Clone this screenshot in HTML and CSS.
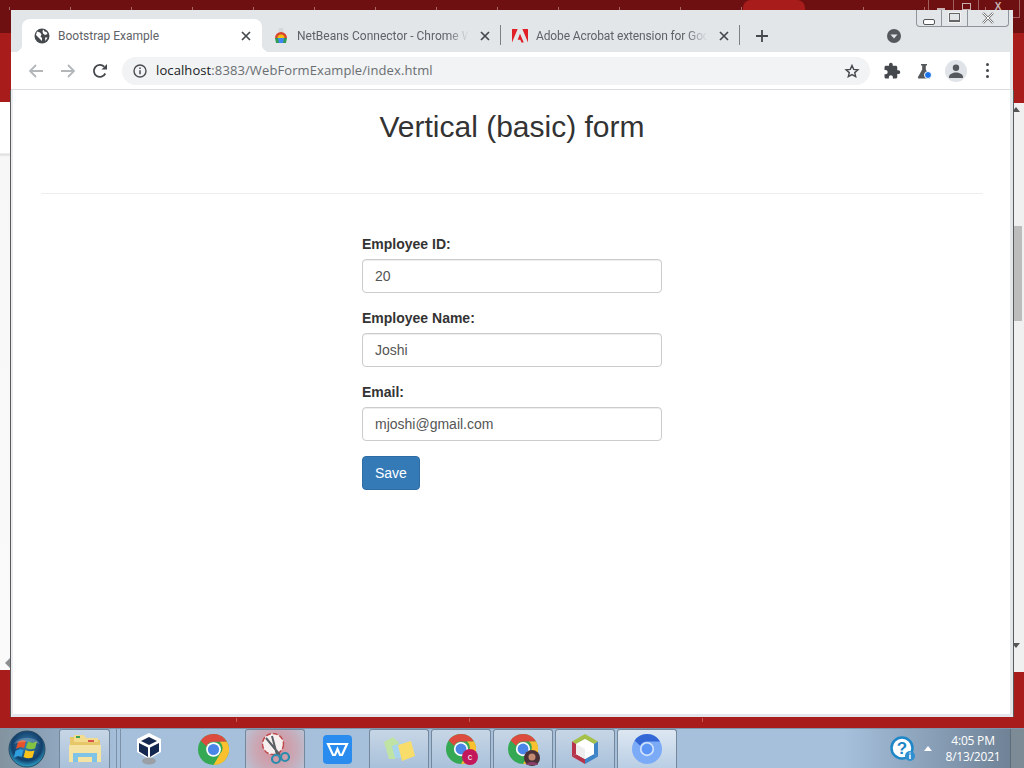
FILE: index.html
```html
<!DOCTYPE html>
<html lang="en">
<head>
<meta charset="utf-8">
<title>Bootstrap Example</title>
<link rel="stylesheet" href="styles.css">
</head>
<body>
<svg class="defs" width="0" height="0">
  <symbol id="chrome" viewBox="0 0 32 32">
    <circle cx="16" cy="16" r="16" fill="#34a853"/>
    <path d="M16 0A16 16 0 0 1 29.900 8H16a8 8 0 0 0-7.300 4.600L2.800 7A16 16 0 0 1 16 0z" fill="#dd4b3e"/>
    <path d="M29.900 8A16 16 0 0 1 16 32l7-12a8 8 0 0 0-.6-12z" fill="#fbc02d"/>
    <circle cx="16" cy="16" r="7.600" fill="#fff"/>
    <circle cx="16" cy="16" r="5.800" fill="#4a86e8"/>
  </symbol>
  <symbol id="close" viewBox="0 0 10 10">
    <path d="M1 1l8 8M9 1L1 9" stroke="#45484c" stroke-width="1.700" fill="none"/>
  </symbol>
</svg>

<main class="desktop">
  <div class="bg-top"><i class="pill"></i></div>
  <div class="bg-ctrl">
    <span class="bg-cell"><i class="bg-min"></i></span>
    <span class="bg-cell"><i class="bg-max"></i></span>
    <span class="bg-cell bg-x">X</span>
  </div>
  <div class="bg-window-left"><i class="scroll-left"></i></div>
  <div class="bg-window-right"><i class="scroll-up"></i><i class="thumb"></i><i class="scroll-down"></i></div>

  <section class="window">
    <div class="win-controls">
      <span class="wc wc-min"><i></i></span>
      <span class="wc wc-max"><i></i></span>
      <span class="wc wc-close"><svg width="14" height="12" viewBox="0 0 14 12"><path d="M2 1l10 10M12 1L2 11" stroke="#777" stroke-width="2.400" fill="none"/><path d="M2 1l10 10M12 1L2 11" stroke="#fff" stroke-width="1" fill="none"/></svg></span>
    </div>
    <header class="tabstrip">
      <div class="tab tab-active">
        <svg class="favicon" width="16" height="16" viewBox="0 0 16 16"><circle cx="8" cy="8" r="7.500" fill="#45494e"/><path d="M3 3.500l3 1 1.500 2-1 2 1.500 1.500v3L5 10 2 7zM9.500 1.500l1 2 2 .5 1 2-2.500 1-2-1.500-.5-2.500zM11 9.500l2.500 0-2 3.500z" fill="#fff"/></svg>
        <span class="tab-title">Bootstrap Example</span>
        <svg class="tab-x" width="10" height="10"><use href="#close"/></svg>
      </div>
      <div class="tab">
        <svg class="favicon" width="16" height="16" viewBox="0 0 16 16"><path d="M6 0h4l.5 4h-5z" fill="#d5d7d9"/><path d="M2 10a6 6 0 0 1 12 0z" fill="#d8452f"/><path d="M4.500 10a3.500 3.500 0 0 1 7 0z" fill="#f4c20d"/><path d="M2 10h12l-1 5H3z" fill="#2f9e55"/><path d="M5 10h6l-1 5H6z" fill="#4285f4"/></svg>
        <span class="tab-title fade">NetBeans Connector - Chrome W</span>
        <svg class="tab-x" width="10" height="10"><use href="#close"/></svg>
      </div>
      <div class="tab">
        <svg class="favicon" width="16" height="16" viewBox="0 0 17 16"><path d="M0 .5h6L0 15zM17 .5h-6l6 14.500zM8.500 5.500L12.500 15H10l-1.200-3H6z" fill="#e01f26"/></svg>
        <span class="tab-title fade fade-tight">Adobe Acrobat extension for Goo</span>
        <svg class="tab-x" width="10" height="10"><use href="#close"/></svg>
      </div>
      <svg class="newtab" width="12" height="12" viewBox="0 0 12 12"><path d="M6 0v12M0 6h12" stroke="#45484c" stroke-width="1.800"/></svg>
      <svg class="tabsearch" width="14" height="14" viewBox="0 0 14 14"><circle cx="7" cy="7" r="7" fill="#55585d"/><path d="M3.500 5.500h7L7 9.500z" fill="#e3e6e9"/></svg>
    </header>

    <nav class="toolbar">
      <svg class="tool-btn" width="16" height="16" viewBox="0 0 16 16"><path d="M15 8H2M8 2L2 8l6 6" stroke="#b4b7ba" stroke-width="1.800" fill="none"/></svg>
      <svg class="tool-btn" width="16" height="16" viewBox="0 0 16 16"><path d="M1 8h13M8 2l6 6-6 6" stroke="#b4b7ba" stroke-width="1.800" fill="none"/></svg>
      <svg class="tool-btn" width="16" height="16" viewBox="0 0 16 16"><path d="M13.300 10.500A6 6 0 1 1 12.200 3.700" stroke="#45484c" stroke-width="1.800" fill="none"/><path d="M9.500 6.500H15V1z" fill="#45484c"/></svg>
      <div class="omnibox">
        <svg width="14" height="14" viewBox="0 0 14 14"><circle cx="7" cy="7" r="6" stroke="#4a4d51" stroke-width="1.400" fill="none"/><path d="M7 6.200v4M7 3.400v1.500" stroke="#4a4d51" stroke-width="1.500"/></svg>
        <span class="url"><b>localhost</b>:8383/WebFormExample/index.html</span>
        <svg class="star" width="16" height="16" viewBox="0 0 16 16"><path d="M8 2.500l1.700 3.900 4.200.4-3.200 2.800 1 4.100L8 11.600l-3.700 2.100 1-4.100-3.200-2.800 4.200-.4z" stroke="#45484c" stroke-width="1.400" fill="none"/></svg>
      </div>
      <svg class="ext ext-puzzle" width="18" height="18" viewBox="0 0 24 24"><path d="M20.500 11H19V7c0-1.100-.9-2-2-2h-4V3.500C13 2.120 11.880 1 10.500 1S8 2.120 8 3.500V5H4c-1.100 0-1.990.9-1.990 2v3.800H3.500c1.490 0 2.700 1.210 2.700 2.700s-1.210 2.700-2.700 2.700H2V20c0 1.100.9 2 2 2h3.800v-1.500c0-1.490 1.210-2.700 2.700-2.700 1.490 0 2.700 1.210 2.700 2.700V22H17c1.100 0 2-.9 2-2v-4h1.500c1.380 0 2.500-1.120 2.500-2.500S21.880 11 20.500 11z" fill="#45484c"/></svg>
      <svg class="ext" width="16" height="16" viewBox="0 0 16 16"><path d="M5 1h6v1.500H9.800v4L14 14c.3 1-.2 1.500-1 1.500H3c-.8 0-1.300-.5-1-1.500l4.200-7.500v-4H5z" fill="#55585b"/><circle cx="12" cy="12" r="3.500" fill="#1a73e8" stroke="#fff"/></svg>
      <div class="avatar"><svg width="14" height="14" viewBox="0 0 14 14"><circle cx="7" cy="3.800" r="3.200" fill="#55585d"/><path d="M0 13c0-3 4-4.500 7-4.500s7 1.500 7 4.500v1H0z" fill="#55585d"/></svg></div>
      <div class="menu-dots"><i></i><i></i><i></i></div>
    </nav>

    <div class="page">
      <h2 class="page-title">Vertical (basic) form</h2>
      <hr class="rule">
      <form class="form">
        <div class="form-group">
          <label for="eid">Employee ID:</label>
          <input id="eid" class="form-control" type="text" value="20">
        </div>
        <div class="form-group">
          <label for="ename">Employee Name:</label>
          <input id="ename" class="form-control" type="text" value="Joshi">
        </div>
        <div class="form-group">
          <label for="email">Email:</label>
          <input id="email" class="form-control" type="text" value="mjoshi@gmail.com">
        </div>
        <button class="btn" type="button">Save</button>
      </form>
    </div>
  </section>
</main>

<footer class="taskbar">
  <div class="start">
    <svg width="38" height="38" viewBox="0 0 38 38">
      <defs><radialGradient id="orb" cx="50%" cy="40%" r="60%"><stop offset="0" stop-color="#3c86b4"/><stop offset=".7" stop-color="#123f6b"/><stop offset="1" stop-color="#2fa7cf"/></radialGradient></defs>
      <circle cx="19" cy="19" r="18" fill="url(#orb)" stroke="#274a63"/>
      <path d="M10 12c3-2 6-2 8-1l-2 7c-2-1-5-1-8 1z" fill="#e8532a"/>
      <path d="M20 11.500c3 1.500 6 1.500 9 0l-2 7c-3 1-6 1-9-.5z" fill="#84c341"/>
      <path d="M7.500 21c3-2 6-2 8-1l-1.800 7c-2-1-5-1-8 1z" fill="#2f9fe0"/>
      <path d="M17.500 20c3 1.500 6 1.500 9 .5l-2 7c-3 1-6 1-9-.5z" fill="#f9c31b"/>
      <path d="M6 14a14 10 0 0 1 26 0c-8-3-18-3-26 0z" fill="#fff" opacity=".22"/>
    </svg>
  </div>
  <div class="task task-explorer">
    <svg width="34" height="30" viewBox="0 0 34 30"><path d="M2 3h12l2 3h16v22H2z" fill="#e8c66a"/><path d="M6 1h10l2 3h12v4H6z" fill="#f3dc8d"/><rect x="8" y="2" width="4" height="2" fill="#3fa055"/><rect x="20" y="6" width="6" height="2" fill="#d9534f"/><path d="M1 11h32v17H1z" fill="#f4e3a3"/><path d="M5 28v-9h24v9h-5v-5H10v5z" fill="#7fc4e6"/></svg>
  </div>
  <div class="task-sep"></div>
  <div class="task-row">
    <div class="task task-plain">
      <svg class="vbox" width="26" height="32" viewBox="0 0 26 32"><path d="M13 0l12 6v13l-12 7-12-7V6z" fill="#fff"/><path d="M13 4l8 4-8 4-8-4z" fill="#14274e"/><path d="M3 10l9 4.500V24l-9-5.500zM23 10l-9 4.500V24l9-5.500z" fill="#14274e"/><ellipse cx="13" cy="28" rx="7" ry="3.500" fill="#9aa0a6"/></svg>
    </div>
    <div class="task task-plain"><svg width="31" height="31"><use href="#chrome"/></svg></div>
    <div class="task task-snip">
      <svg width="32" height="32" viewBox="0 0 32 32"><circle cx="14" cy="11" r="10.500" fill="#f6f0f0" stroke="#c04848" stroke-width="1.400" stroke-dasharray="5 2"/><path d="M7 5l14 17M13 3l5 19" stroke="#5a5f63" stroke-width="2"/><circle cx="17" cy="26" r="4" fill="none" stroke="#2a8cae" stroke-width="2.200"/><circle cx="26" cy="24" r="4" fill="none" stroke="#2a8cae" stroke-width="2.200"/></svg>
    </div>
    <div class="task task-plain">
      <svg width="29" height="29" viewBox="0 0 29 29"><rect width="29" height="29" rx="4" fill="#2b8cf0"/><path d="M5 9h19l-5 11h-2l-2.500-6-2.500 6h-2z" fill="none" stroke="#fff" stroke-width="2.200"/></svg>
    </div>
    <div class="task">
      <svg width="32" height="30" viewBox="0 0 32 30"><path d="M1 8l9-5 7 7-5 15H6z" fill="#bfe3a5"/><path d="M9 12l11-4 4 16H12z" fill="#a8d4ec"/><path d="M15 11l13-4 4 15-13 5z" fill="#f9dd6b"/></svg>
    </div>
    <div class="task">
      <svg class="over" width="30" height="30"><use href="#chrome"/></svg>
      <span class="badge-c">c</span>
    </div>
    <div class="task">
      <svg class="over" width="30" height="30"><use href="#chrome"/></svg>
      <svg class="badge-face" width="16" height="16" viewBox="0 0 16 16"><circle cx="8" cy="8" r="8" fill="#4b3038"/><circle cx="8" cy="7" r="3.500" fill="#c58b72"/><path d="M2 15c1-4 11-4 12 0z" fill="#8a3f68"/></svg>
    </div>
    <div class="task">
      <svg width="30" height="32" viewBox="0 0 30 32"><path d="M15 1l13 7.500-4 2.500-9-5-9 5-4-2.500z" fill="#a6c14a"/><path d="M2 8.500L6 11v10l-4 2.500z" fill="#b8344a"/><path d="M28 8.500L24 11v10l4 2.500z" fill="#3d85c6"/><path d="M2 23.500l4-2.500 9 5v5z" fill="#b8344a"/><path d="M28 23.500L24 21l-9 5v5z" fill="#3d85c6"/><path d="M15 6l9 5v10l-9 5-9-5V11z" fill="#fff"/><path d="M6 11l9 5v10l-9-5z" fill="#eeeeee"/></svg>
    </div>
    <div class="task task-active">
      <svg width="30" height="30" viewBox="0 0 32 32"><circle cx="16" cy="16" r="16" fill="#7baaf7"/><path d="M16 0A16 16 0 0 1 29.900 8H16a8 8 0 0 0-7.300 4.600L2.800 7A16 16 0 0 1 16 0z" fill="#3367d6"/><circle cx="16" cy="16" r="7.600" fill="#d2e3fc"/><circle cx="16" cy="16" r="5.800" fill="#5b95f5"/></svg>
    </div>
  </div>
  <div class="tray">
    <svg class="help" width="26" height="26" viewBox="0 0 26 26"><circle cx="12" cy="12" r="10.500" fill="#fff" stroke="#1e87c8" stroke-width="2.500"/><text x="12" y="18" class="help-q">?</text><circle cx="20" cy="20" r="5" fill="#2f8fd0"/><path d="M20 18.500v4.500M20 16.500v1" stroke="#fff" stroke-width="1.500"/></svg>
    <i class="tray-arrow"></i>
    <div class="clock"><span>4:05 PM</span><span>8/13/2021</span></div>
    <div class="show-desktop"></div>
  </div>
</footer>
</body>
</html>
```
FILE: styles.css
```css
* { box-sizing: border-box; }
html, body { margin: 0; height: 768px; overflow: hidden; }
body { display: flex; flex-direction: column; font-family: "Liberation Sans", Arial, sans-serif; background: #a81c1c; }
.defs { position: absolute; }

.desktop { position: relative; height: 728px; background: #a81c1c; }
.desktop::after { content: ""; position: absolute; left: 10px; right: 100px; bottom: 6px; height: 4px; background-image: linear-gradient(90deg, #c25a5a 1px, transparent 1px); background-size: 233px 100%; background-position: 226px 0; }
.bg-top { position: absolute; left: 0; top: 0; width: 100%; height: 33px; background-color: #6e1012; background-image: linear-gradient(90deg, #a86a6a 1px, transparent 1px); background-size: 61px 3px; background-position: 9px 7px; background-repeat: repeat-x; }
.pill { position: absolute; left: 743px; top: 0; width: 62px; height: 12px; border-radius: 8px 8px 0 0; background: #a81c1c; }
.bg-ctrl { position: absolute; left: 928px; top: 0; width: 92px; height: 18px; display: flex; border: 1px solid #a06060; border-top: 0; color: #c9b0b0; }
.bg-cell { width: 25px; display: flex; justify-content: center; border-right: 1px solid #a06060; }
.bg-x { flex: 1; border-right: 0; padding-right: 2px; font-size: 10px; font-weight: 700; line-height: 14px; }
.bg-min { width: 8px; height: 2px; margin-top: 8px; background: #c9b0b0; }
.bg-max { width: 9px; height: 7px; margin-top: 3px; border: 1px solid #c9b0b0; }
.bg-window-left { position: absolute; left: 0; top: 102px; width: 12px; height: 568px; background: linear-gradient(#fff 0, #fff 51px, #dcdcdc 52px, #f7f7f7 55px, #fafafa 100%); }
.scroll-left { position: absolute; left: 5px; top: 556px; width: 0; height: 0; border: 5px solid transparent; border-left: 0; border-right: 5px solid #8c8f92; }
.bg-window-right { position: absolute; left: 1010px; top: 103px; width: 14px; height: 569px; background: #f0f0f0; }
.thumb { position: absolute; left: 3px; top: 123px; width: 9px; height: 95px; background: #bcbcbc; }
.scroll-up, .scroll-down { position: absolute; left: 2px; width: 0; height: 0; border: 4px solid transparent; }
.scroll-up { top: 4px; border-top: 0; border-bottom: 5px solid #555; }
.scroll-down { top: 540px; border-bottom: 0; border-top: 5px solid #555; }

.window { position: absolute; left: 11px; top: 10px; width: 1002px; height: 707px; display: flex; flex-direction: column; background: #fff; }
.win-controls { position: absolute; left: 905px; top: 0; width: 93px; height: 17px; display: flex; border: 1px solid #8e9499; border-top: 0; border-radius: 0 0 4px 4px; z-index: 2; }
.wc { display: flex; align-items: center; justify-content: center; border-right: 1px solid #8e9499; }
.wc-min { width: 25px; }
.wc-max { width: 26px; }
.wc-close { flex: 1; border-right: 0; }
.wc-min i { width: 12px; height: 6px; margin-top: 7px; border: 1px solid #555; border-radius: 2px; background: #fff; }
.wc-max i { width: 11px; height: 9px; margin-top: -2px; border: 2px solid #666; border-width: 1px 1px 2px; box-shadow: 0 0 0 1px #f2f2f2; }

.tabstrip { flex: none; height: 42px; display: flex; align-items: flex-end; padding-left: 11px; background: #e3e6e9; position: relative; }
.tab { position: relative; width: 239px; height: 33px; display: flex; align-items: center; padding: 0 11px; font: 12px "Roboto", "Noto Sans", sans-serif; color: #5f6368; }
.tab + .tab::after { content: ""; position: absolute; right: 0; top: 6px; height: 20px; width: 1px; background: #7d8185; }
.tab-active { width: 240px; background: #fff; border-radius: 8px 8px 0 0; padding-left: 12px; }
.tab-active::before, .tab-active::after { content: ""; position: absolute; bottom: 0; width: 8px; height: 8px; }
.tab-active::before { left: -8px; background: radial-gradient(circle at 0 0, transparent 8px, #fff 8.500px); }
.tab-active::after { right: -8px; background: radial-gradient(circle at 100% 0, transparent 8px, #fff 8.500px); }
.favicon { flex: none; margin-right: 8px; }
.tab-title { flex: 1; min-width: 0; white-space: nowrap; overflow: hidden; }
.fade { -webkit-mask-image: linear-gradient(90deg, #000 86%, transparent 98%); mask-image: linear-gradient(90deg, #000 86%, transparent 98%); }
.fade-tight { letter-spacing: -.12px; }
.tab-x { flex: none; margin-left: 8px; }
.newtab { margin: 0 0 10px 16px; }
.tabsearch { margin: 0 0 9px 119px; }

.toolbar { flex: none; height: 38px; display: flex; align-items: center; padding: 0 0 0 17px; background: #fff; border-bottom: 1px solid #dadce0; border-right: 3px solid #e3e6e9; }
.tool-btn { flex: none; margin-right: 16px; }
.omnibox { width: 748px; height: 28px; margin-left: -2px; display: flex; align-items: center; padding: 0 10px 0 11px; border-radius: 14px; background: #f1f3f4; }
.url { flex: 1; margin-left: 9px; font: 13px/1 "Open Sans", "Noto Sans", sans-serif; color: #6a6e72; letter-spacing: .1px; }
.url b { font-weight: 400; color: #202124; }
.ext { flex: none; margin-left: 14px; margin-right: 2px; }
.ext-puzzle { margin-left: 13px; margin-right: 1px; }
.ext + .ext { margin-left: 14px; }
.avatar { width: 22px; height: 22px; margin-left: 11px; display: flex; align-items: center; justify-content: center; border-radius: 50%; background: #e0e3e7; }
.menu-dots { display: flex; flex-direction: column; gap: 3px; margin-left: 19px; }
.menu-dots i { width: 3px; height: 3px; border-radius: 50%; background: #45484c; }

.page { flex: 1; min-height: 0; padding: 20px 27px 0 28px; color: #333; border-left: 2px solid #eaecef; border-right: 3px solid #e3e6e9; border-bottom: 3px solid #e3e6ec; box-shadow: -1px 0 0 #5a5a5a, 1px 0 0 #5a5a5a; }
.page-title { margin: 0; font-size: 30px; line-height: 33px; font-weight: 500; text-align: center; }
.rule { height: 1px; margin: 50px 0 40px; border: 0; background: #eee; }
.form { width: 300px; margin: 0 auto; font-size: 14px; }
.form-group { margin-bottom: 15px; }
.form-group label { display: block; margin-bottom: 5px; line-height: 20px; font-weight: 700; }
.form-control { display: block; width: 100%; height: 34px; padding: 6px 12px; font: 14px/20px "Liberation Sans", Arial, sans-serif; color: #555; background: #fff; border: 1px solid #ccc; border-radius: 4px; box-shadow: inset 0 1px 1px rgba(0,0,0,.075); }
.btn { display: block; height: 34px; padding: 6px 12px; font: 14px/20px "Liberation Sans", Arial, sans-serif; color: #fff; background: #337ab7; border: 1px solid #2e6da4; border-radius: 4px; }

.taskbar { height: 40px; flex: none; display: flex; align-items: stretch; background: linear-gradient(90deg, #83939f 0, #8fa6bd 56px, #a6c0dc 120px); border-top: 1px solid #7d95ad; }
.start { width: 59px; display: flex; align-items: center; justify-content: center; padding-right: 5px; }
.task { position: relative; width: 60px; display: flex; align-items: center; justify-content: center; border: 1px solid #75879a; border-bottom: 0; border-radius: 3px 3px 0 0; background: linear-gradient(#c7d6e6, #a9c1da); }
.task-explorer { width: 51px; }
.task-sep { width: 11px; border-right: 1px solid #7d92a8; box-shadow: inset -3px 0 0 #a6c0dc, inset -4px 0 0 #7d92a8; }
.task-row { display: flex; gap: 2px; }
.task-plain { border-color: transparent; background: none; }
.vbox { margin-left: -4px; }
.task-snip { background: radial-gradient(circle at 50% 50%, #d88c99 0, #c9a9b6 60%, #b9c2d4 100%); }
.task-active { background: linear-gradient(#dde7f2, #b9cee4); }
.badge-c { position: absolute; left: 30px; top: 19px; width: 16px; height: 16px; border-radius: 50%; background: #c2185b; color: #fff; font: 9px/16px "Liberation Sans", sans-serif; text-align: center; }
.badge-face { position: absolute; left: 30px; top: 20px; }
.tray { flex: 1; display: flex; align-items: center; justify-content: flex-end; background: linear-gradient(90deg, #a6c0dc 0, #a6c0dc 48%, #6f8296 96%); }
.help { margin-right: 8px; }
.help-q { font: 700 17px "Liberation Sans", sans-serif; fill: #1e87c8; text-anchor: middle; }
.tray-arrow { width: 0; height: 0; margin-right: 6px; border: 4px solid transparent; border-bottom: 5px solid #fff; border-top: 0; }
.clock { width: 70px; margin-right: 2px; padding-top: 1px; display: flex; flex-direction: column; align-items: center; font: 12px/16px "Open Sans", "Noto Sans", sans-serif; letter-spacing: -.2px; color: #fff; }
.show-desktop { width: 14px; height: 100%; background: #7d8b96; border-left: 1px solid #5f6d78; }
```
